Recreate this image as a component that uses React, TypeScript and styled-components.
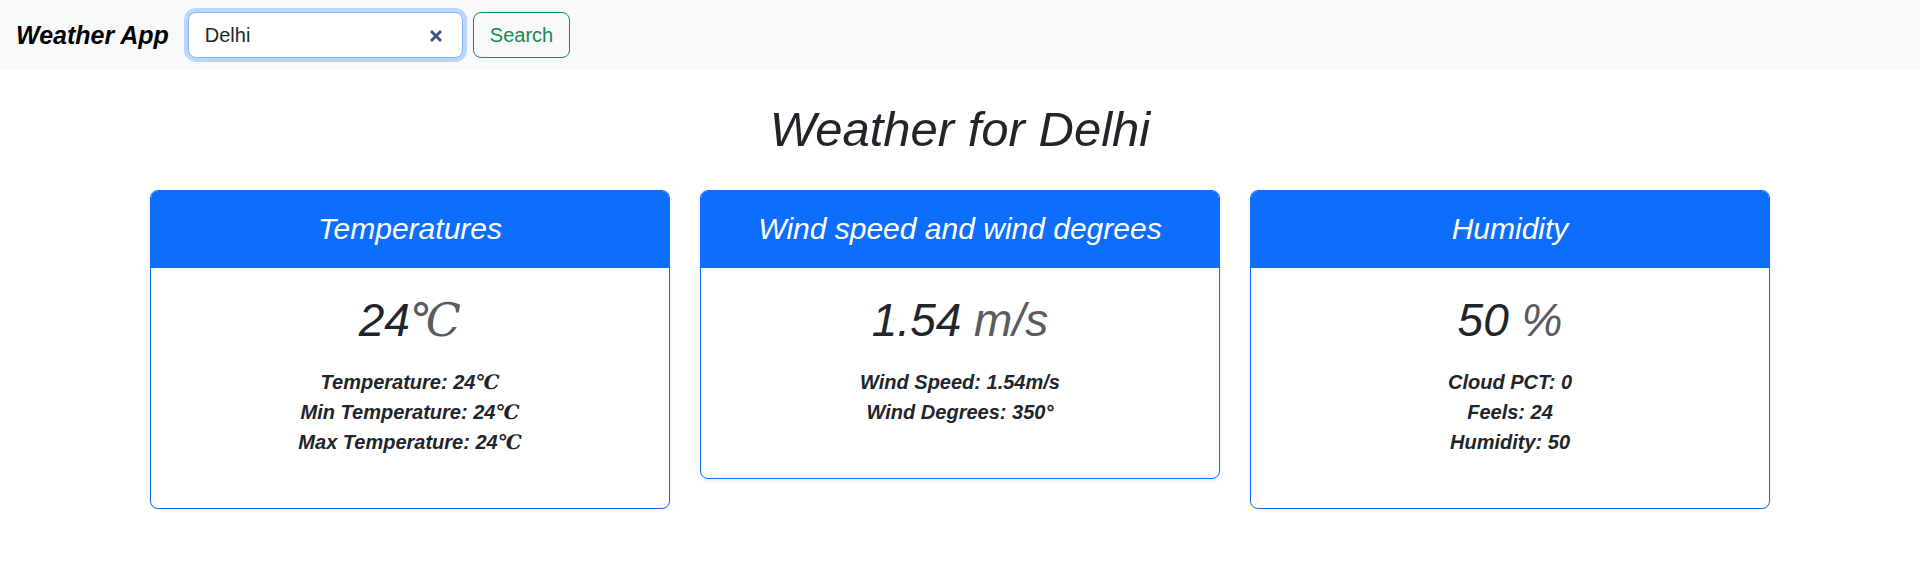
import React from "react";
import styled, { createGlobalStyle } from "styled-components";

const GlobalStyle = createGlobalStyle`
  * { box-sizing: border-box; }
  body {
    margin: 0;
    font-family: "Liberation Sans", Arial, sans-serif;
    color: #212529;
    background: #ffffff;
  }
`;

const Navbar = styled.nav`
  height: 70px;
  background: #f8f9fa;
  display: flex;
  align-items: center;
  padding: 0 16px;
`;

const Brand = styled.span`
  font-size: 25px;
  font-weight: 700;
  font-style: italic;
  color: #000;
  margin-right: 19px;
  white-space: nowrap;
`;

const SearchForm = styled.form`
  display: flex;
  align-items: center;
  gap: 10px;
`;

const SearchBox = styled.div`
  width: 275px;
  height: 46px;
  display: flex;
  align-items: center;
  padding: 0 19px 0 16px;
  background: #fff;
  border: 1px solid #86b7fe;
  border-radius: 8px;
  box-shadow: 0 0 0 4px rgba(13, 110, 253, 0.25);
`;

const SearchInput = styled.input`
  flex: 1;
  min-width: 0;
  border: none;
  outline: none;
  background: transparent;
  font-family: inherit;
  font-size: 20px;
  color: #212529;
  padding: 0;
`;

const ClearButton = styled.span`
  display: flex;
  align-items: center;
  justify-content: center;
  width: 14px;
  height: 14px;
  color: #3c5787;
  margin-top: 2px;
`;

const SearchButton = styled.button`
  height: 46px;
  padding: 0 16px;
  background: transparent;
  border: 1px solid #198754;
  border-radius: 8px;
  color: #198754;
  font-family: inherit;
  font-size: 20px;
  cursor: pointer;
`;

const Main = styled.main`
  padding-top: 30px;
`;

const Title = styled.h1`
  margin: 0 0 31px;
  text-align: center;
  font-size: 49px;
  font-style: italic;
  font-weight: 400;
  line-height: 1.2;
  color: #212529;
`;

const CardRow = styled.div`
  display: flex;
  justify-content: center;
  align-items: flex-start;
  gap: 30px;
`;

const Card = styled.section`
  width: 520px;
  border: 1px solid #0d6efd;
  border-radius: 8px;
  overflow: hidden;
  background: #fff;
  box-shadow: 0 2px 5px rgba(0, 0, 0, 0.08);
`;

const CardHeader = styled.h3`
  margin: 0;
  height: 77px;
  display: flex;
  align-items: center;
  justify-content: center;
  background: #0d6efd;
  color: #fff;
  font-size: 30px;
  font-weight: 400;
  font-style: italic;
`;

const CardBody = styled.div`
  padding: 25px 16px 51px;
  text-align: center;
`;

const BigValue = styled.div`
  font-size: 46px;
  font-style: italic;
  line-height: 1.2;
  color: #212529;
  margin-bottom: 19px;
`;

const Unit = styled.span<{ $serif?: boolean }>`
  color: #595c5f;
  font-family: ${(p) =>
    p.$serif ? '"Liberation Serif", "DejaVu Serif", serif' : "inherit"};
  font-style: italic;
`;

const Celsius = styled.span`
  font-family: "Liberation Serif", "DejaVu Serif", serif;
  font-style: italic;
`;

const Details = styled.ul`
  list-style: none;
  margin: 0;
  padding: 0;
  font-size: 20px;
  line-height: 30px;
  font-weight: 700;
  font-style: italic;
  color: #212529;
`;

const XIcon = () => (
  <svg width="14" height="14" viewBox="0 0 14 14" aria-hidden="true">
    <path
      d="M2 2 L12 12 M12 2 L2 12"
      stroke="currentColor"
      strokeWidth="3"
      strokeLinecap="butt"
    />
  </svg>
);

type CardData = {
  title: string;
  value: string;
  unit: string;
  serifUnit?: boolean;
  lines: React.ReactNode[];
};

const C = <Celsius>℃</Celsius>;

const cards: CardData[] = [
  {
    title: "Temperatures",
    value: "24",
    unit: "℃",
    serifUnit: true,
    lines: [
      <>Temperature: 24{C}</>,
      <>Min Temperature: 24{C}</>,
      <>Max Temperature: 24{C}</>,
    ],
  },
  {
    title: "Wind speed and wind degrees",
    value: "1.54 ",
    unit: "m/s",
    lines: [<>Wind Speed: 1.54m/s</>, <>Wind Degrees: 350°</>],
  },
  {
    title: "Humidity",
    value: "50 ",
    unit: "%",
    lines: [<>Cloud PCT: 0</>, <>Feels: 24</>, <>Humidity: 50</>],
  },
];

export default function App() {
  return (
    <>
      <GlobalStyle />
      <Navbar>
        <Brand>Weather App</Brand>
        <SearchForm onSubmit={(e) => e.preventDefault()}>
          <SearchBox>
            <SearchInput type="text" defaultValue="Delhi" />
            <ClearButton>
              <XIcon />
            </ClearButton>
          </SearchBox>
          <SearchButton type="submit">Search</SearchButton>
        </SearchForm>
      </Navbar>
      <Main>
        <Title>Weather for Delhi</Title>
        <CardRow>
          {cards.map((c) => (
            <Card key={c.title}>
              <CardHeader>{c.title}</CardHeader>
              <CardBody>
                <BigValue>
                  {c.value}
                  <Unit $serif={c.serifUnit}>{c.unit}</Unit>
                </BigValue>
                <Details>
                  {c.lines.map((l, i) => (
                    <li key={i}>{l}</li>
                  ))}
                </Details>
              </CardBody>
            </Card>
          ))}
        </CardRow>
      </Main>
    </>
  );
}
